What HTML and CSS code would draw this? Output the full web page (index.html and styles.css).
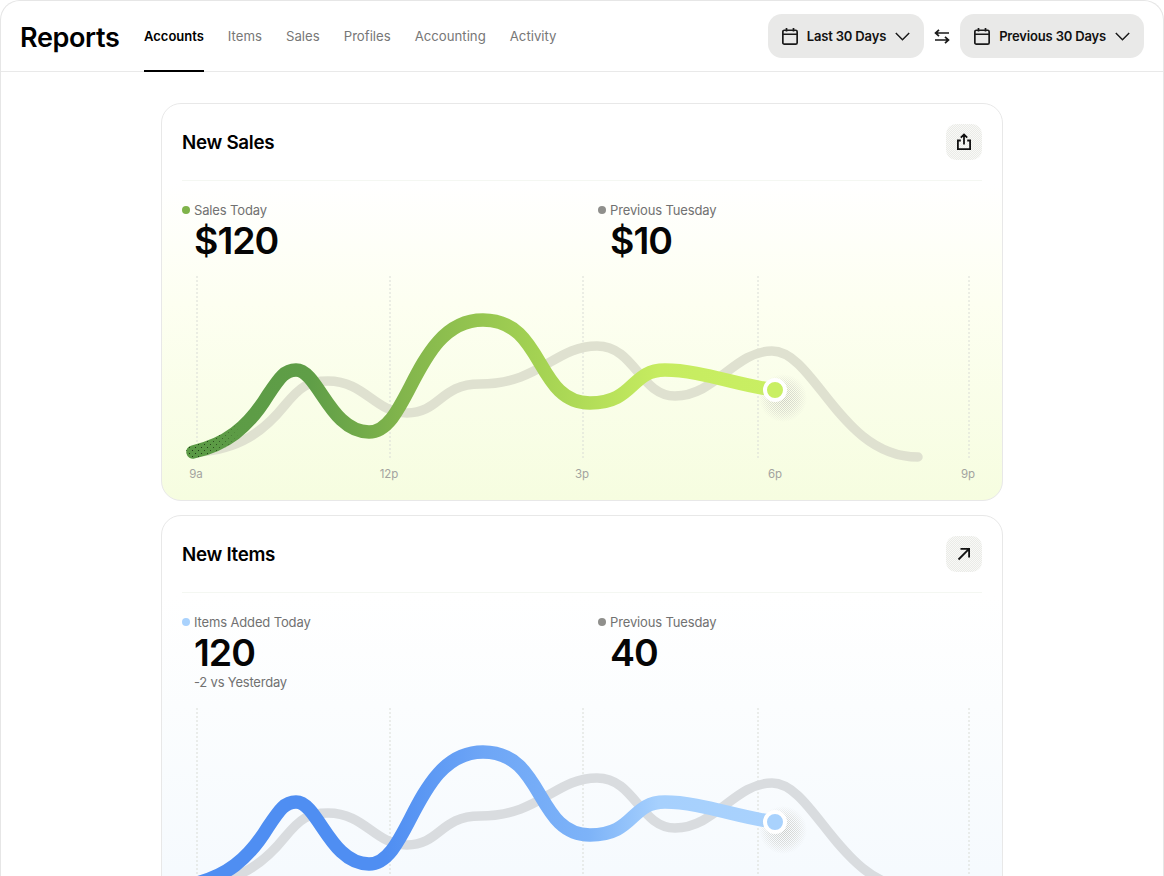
FILE: index.html
```html
<!DOCTYPE html>
<html lang="en">
<head>
<meta charset="utf-8">
<title>Reports</title>
<link rel="stylesheet" href="styles.css">
</head>
<body>
<div class="window">
  <header class="topbar">
    <h1 class="brand">Reports</h1>
    <nav class="tabs">
      <a class="tab active">Accounts</a>
      <a class="tab">Items</a>
      <a class="tab">Sales</a>
      <a class="tab">Profiles</a>
      <a class="tab">Accounting</a>
      <a class="tab">Activity</a>
    </nav>
    <div class="ranges">
      <button class="range">
        <svg class="ico-cal" viewBox="0 0 16 17" fill="none" stroke="#1a1a1a" stroke-width="1.7"><rect x=".85" y="2.25" width="14.3" height="13.900" rx="1.500"/><path d="M.85 6.250h14.300M4.500 0v3.500M11.500 0v3.500"/></svg>
        <span>Last 30 Days</span>
        <svg class="ico-chev" viewBox="0 0 15 9" fill="none" stroke="#1a1a1a" stroke-width="1.5"><path d="M.8 1l6.700 6.700L14.200 1"/></svg>
      </button>
      <svg class="ico-swap" viewBox="0 0 16 15" fill="none" stroke="#1a1a1a" stroke-width="1.7"><path d="M15 4H1.500M5 .8L1.500 4 5 7.200M1 11h13.500M11 7.800l3.500 3.200L11 14.200"/></svg>
      <button class="range">
        <svg class="ico-cal" viewBox="0 0 16 17" fill="none" stroke="#1a1a1a" stroke-width="1.7"><rect x=".85" y="2.25" width="14.3" height="13.900" rx="1.500"/><path d="M.85 6.250h14.300M4.500 0v3.500M11.500 0v3.500"/></svg>
        <span>Previous 30 Days</span>
        <svg class="ico-chev" viewBox="0 0 15 9" fill="none" stroke="#1a1a1a" stroke-width="1.5"><path d="M.8 1l6.700 6.700L14.200 1"/></svg>
      </button>
    </div>
  </header>

  <main class="content">
    <section class="card card-green">
      <div class="card-head">
        <h2 class="card-title">New Sales</h2>
        <button class="icon-btn">
          <svg viewBox="0 0 16 18" width="16" height="18" fill="none" stroke="#111" stroke-width="1.800"><path d="M4.800 7.500H1.900v8.600h12.200V7.500h-2.900M8 11.500V1.500M4.800 4.600L8 1.400l3.200 3.200"/></svg>
        </button>
      </div>
      <div class="stats">
        <div class="stat">
          <div class="stat-label"><i class="dot dot-green"></i>Sales Today</div>
          <div class="stat-value">$120</div>
        </div>
        <div class="stat">
          <div class="stat-label"><i class="dot dot-gray"></i>Previous Tuesday</div>
          <div class="stat-value">$10</div>
        </div>
      </div>
      <svg class="chart" viewBox="162 270 840 220" width="840" height="220">
        <defs>
          <linearGradient id="lineGreen" gradientUnits="userSpaceOnUse" x1="193" y1="0" x2="775" y2="0">
            <stop offset="0" stop-color="#5b9a45"/>
            <stop offset=".2" stop-color="#5f9e47"/>
            <stop offset=".36" stop-color="#82b54c"/>
            <stop offset=".6" stop-color="#a5d353"/>
            <stop offset=".8" stop-color="#c6ec60"/>
            <stop offset="1" stop-color="#c9ef63"/>
          </linearGradient>
          <pattern id="grain" width="2" height="2" patternUnits="userSpaceOnUse"><rect width="1" height="1" fill="#c4c4be"/><rect x="1" y="1" width="1" height="1" fill="#c4c4be"/></pattern>
          <pattern id="specks" width="6" height="6" patternUnits="userSpaceOnUse"><rect width="1" height="1" fill="#1d3513"/><rect x="3" y="3" width="1" height="1" fill="#1d3513"/></pattern>
          <linearGradient id="specksFade" gradientUnits="userSpaceOnUse" x1="186" y1="0" x2="240" y2="0"><stop offset="0" stop-color="#fff"/><stop offset=".5" stop-color="#fff" stop-opacity=".8"/><stop offset="1" stop-color="#fff" stop-opacity="0"/></linearGradient>
          <mask id="specksMask" maskUnits="userSpaceOnUse" x="162" y="270" width="840" height="220"><rect x="186" y="420" width="54" height="45" fill="url(#specksFade)"/></mask>
          <radialGradient id="haloFade"><stop offset="0" stop-color="#fff" stop-opacity=".85"/><stop offset=".6" stop-color="#fff" stop-opacity=".5"/><stop offset="1" stop-color="#fff" stop-opacity="0"/></radialGradient>
          <mask id="haloMask"><circle cx="783" cy="398" r="24" fill="url(#haloFade)"/></mask>
        </defs>
        <g class="grid">
          <path d="M197 276V460M390 276V460M583 276V460M758 276V460M969 276V460"/>
        </g>
        <path class="line-prev prev-green" d="M196 452C240 450 265 430 285 405C300 387 308 381 328 381C365 381 375 413 407 413C440 413 440 384 480 384C540 384 555 346 597 346C635 346 640 396 675 396C715 396 735 351 772 351C815 351 840 457 918 457"/>
        <path class="line-main" stroke="url(#lineGreen)" d="M193 452C225 445 248 428 268 395C280 377 285 370 296 370C318 370 330 432 369 432C410 432 415 320 483 320C545 320 535 403 590 403C635 403 630 370 665 370C700 370 740 386 775 390"/>
        <path class="line-main" stroke="url(#specks)" mask="url(#specksMask)" d="M193 452C225 445 248 428 268 395"/>
        <circle cx="783" cy="398" r="24" fill="url(#grain)" mask="url(#haloMask)"/>
        <circle class="pt" cx="775" cy="390" r="10" fill="#c9ef63"/>
        <g class="axis">
          <text x="196" y="478">9a</text>
          <text x="389" y="478">12p</text>
          <text x="582" y="478">3p</text>
          <text x="775" y="478">6p</text>
          <text x="968" y="478">9p</text>
        </g>
      </svg>
    </section>

    <section class="card card-blue">
      <div class="card-head">
        <h2 class="card-title">New Items</h2>
        <button class="icon-btn">
          <svg viewBox="0 0 14 14" width="14" height="14" fill="none" stroke="#111" stroke-width="1.800"><path d="M1.500 12.500L11.800 2.200M3.500 1.900h8.600v8.600"/></svg>
        </button>
      </div>
      <div class="stats">
        <div class="stat">
          <div class="stat-label"><i class="dot dot-blue"></i>Items Added Today</div>
          <div class="stat-value">120</div>
          <div class="stat-sub">-2 vs Yesterday</div>
        </div>
        <div class="stat">
          <div class="stat-label"><i class="dot dot-gray"></i>Previous Tuesday</div>
          <div class="stat-value">40</div>
        </div>
      </div>
      <svg class="chart" viewBox="162 270 840 220" width="840" height="220">
        <defs>
          <linearGradient id="lineBlue" gradientUnits="userSpaceOnUse" x1="193" y1="0" x2="775" y2="0">
            <stop offset="0" stop-color="#4f8ef2"/>
            <stop offset=".33" stop-color="#4f8ef2"/>
            <stop offset=".5" stop-color="#6ea6f6"/>
            <stop offset=".68" stop-color="#7db3f8"/>
            <stop offset=".8" stop-color="#a6d0fd"/>
            <stop offset="1" stop-color="#a9d2fd"/>
          </linearGradient>
          <mask id="haloMask2"><circle cx="783" cy="398" r="24" fill="url(#haloFade)"/></mask>
        </defs>
        <g class="grid">
          <path d="M197 276V460M390 276V460M583 276V460M758 276V460M969 276V460"/>
        </g>
        <path class="line-prev prev-blue" d="M196 452C240 450 265 430 285 405C300 387 308 381 328 381C365 381 375 413 407 413C440 413 440 384 480 384C540 384 555 346 597 346C635 346 640 396 675 396C715 396 735 351 772 351C815 351 840 457 918 457"/>
        <path class="line-main" stroke="url(#lineBlue)" d="M193 452C225 445 248 428 268 395C280 377 285 370 296 370C318 370 330 432 369 432C410 432 415 320 483 320C545 320 535 403 590 403C635 403 630 370 665 370C700 370 740 386 775 390"/>
        <circle cx="783" cy="398" r="24" fill="url(#grain)" mask="url(#haloMask2)"/>
        <circle class="pt" cx="775" cy="390" r="10" fill="#a9d2fd"/>
      </svg>
    </section>
  </main>
</div>
</body>
</html>
```
FILE: styles.css
```css
* { box-sizing: border-box; }
html, body { margin: 0; padding: 0; background: #fff; }
body { font-family: "Inter", "Liberation Sans", sans-serif; color: #000; height: 876px; overflow: hidden; }

.window {
  width: 1164px;
  height: 876px;
  overflow: hidden;
  background: #fff;
  border: 1px solid #e6e6e6;
  border-bottom: 0;
  border-radius: 20px 20px 0 0;
}

.topbar {
  height: 71px;
  display: flex;
  align-items: center;
  padding: 0 19px;
  border-bottom: 1px solid #e9e9e9;
}
.brand { margin: 2px 24px 0 0; font-size: 27px; font-weight: 600; letter-spacing: -.35px; line-height: 1; width: 100px; white-space: nowrap; }
.tabs { display: flex; gap: 24px; align-self: stretch; }
.tab {
  display: flex;
  align-items: center;
  font-size: 13.200px;
  color: #777;
  height: 71px;
  border-bottom: 2px solid transparent;
  padding-top: 1px;
}
.tab.active { color: #000; font-size: 13px; font-weight: 600; border-bottom-color: #000; }

.ranges { margin-left: auto; display: flex; align-items: center; gap: 10px; }
.range {
  height: 44px;
  display: flex;
  align-items: center;
  gap: 9px;
  padding: 0 14px;
  border: 0;
  border-radius: 14px;
  background: #e9e9e8;
  font: 600 13px "Inter", "Liberation Sans", sans-serif;
  letter-spacing: -.17px;
  color: #111;
}
.ico-cal { width: 16px; height: 17px; }
.ico-chev { width: 15px; height: 9px; }
.ico-swap { width: 16px; height: 15px; }

.content { display: flex; flex-direction: column; align-items: center; gap: 14px; padding-top: 31px; }

.card {
  flex: none;
  width: 842px;
  border: 1px solid #e8e8e8;
  border-radius: 20px;
  padding: 20px 20px 0;
  overflow: hidden;
}
.card-green { background: linear-gradient(#fff 80px, #fdfff1 200px, #f6fde0 100%); height: 398px; }
.card-blue { background: linear-gradient(#fff 80px, #fbfdfe 190px, #f4f9fe 100%); height: 418px; }

.card-head {
  height: 57px;
  display: flex;
  align-items: flex-start;
  justify-content: space-between;
  border-bottom: 1px solid #f4f7f2;
}
.card-title { margin: 0; font-size: 18.800px; font-weight: 600; letter-spacing: -.3px; line-height: 38px; }
.icon-btn {
  width: 36px;
  height: 36px;
  padding: 0;
  border: 0;
  border-radius: 10px;
  display: flex;
  align-items: center;
  justify-content: center;
  background: repeating-conic-gradient(#eaebe7 0 25%, #f9f9f7 0 50%) 0 0 / 2px 2px;
}

.stats { display: grid; grid-template-columns: 416px 1fr; padding-top: 20px; }
.stat-label { display: flex; align-items: center; font-size: 13px; line-height: 18px; color: #717171; letter-spacing: -.14px; }
.dot { width: 8px; height: 8px; border-radius: 50%; margin-right: 4px; }
.dot-green { background: #7fb34a; }
.dot-blue { background: #a9d2fd; }
.dot-gray { background: #8f8f8c; }
.stat-value { margin: 2px 0 0 12px; font-size: 37.500px; font-weight: 600; line-height: 40px; letter-spacing: -1px; color: #050505; }
.stat-sub { margin: 0 0 0 12px; font-size: 13px; line-height: 18px; color: #717171; letter-spacing: -.2px; }

.chart { display: block; margin: 9px -20px 0; }
.card-blue .chart { margin-top: 11px; }
.grid path { fill: none; stroke: #d9dcd6; stroke-width: 1; stroke-dasharray: 2 2; }
.line-prev { fill: none; stroke-width: 9.500; stroke-linecap: round; }
.prev-green { stroke: #dfe1d0; }
.prev-blue { stroke: #d9dcdf; }
.line-main { fill: none; stroke-width: 13.500; stroke-linecap: round; }
.pt { stroke: #fff; stroke-width: 4; }
.axis text { font-size: 11.500px; fill: #a3a3a0; text-anchor: middle; }
```
